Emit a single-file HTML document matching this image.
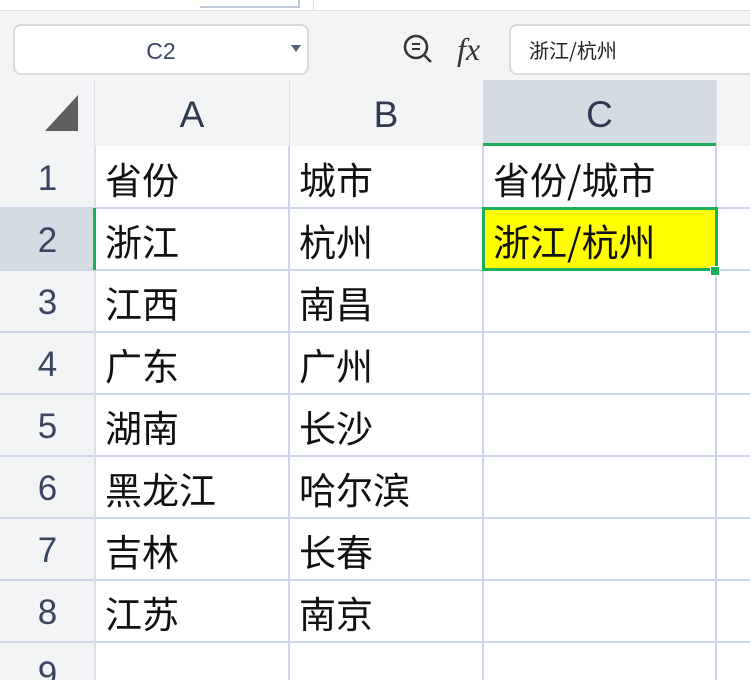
<!DOCTYPE html>
<html style="overflow:hidden;width:750px;height:680px"><head><meta charset="utf-8"><style>
body{margin:0;width:750px;height:680px;overflow:hidden;background:#fff;position:relative;font-family:"Liberation Sans","Noto Sans CJK SC",sans-serif}
.a{position:absolute;box-sizing:border-box}
.cell{position:absolute;box-sizing:border-box;font-size:37px;color:#111;padding-left:10px;line-height:64px;font-family:"Noto Sans CJK SC",sans-serif;white-space:nowrap}
.rh{position:absolute;left:0;width:95px;height:62px;text-align:center;line-height:66px;font-size:35px;color:#3a4560;background:#f3f4f6}
.ch{position:absolute;top:80px;height:66px;text-align:center;line-height:70px;font-size:37px;color:#2f3a52}
.hl{position:absolute;left:0;width:750px;height:2px;background:#cdd6e8}
.vl{position:absolute;top:146px;width:2px;height:534px;background:#cdd6e8}
</style></head><body>
<div class="a" style="left:0;top:0;width:750px;height:11px;background:#fff;border-bottom:1px solid #dde0e5"></div>
<div class="a" style="left:200px;top:0;width:100px;height:8px;border-right:2px solid #c0c8d8;border-bottom:2px solid #c0c8d8"></div>
<div class="a" style="left:313px;top:0;width:1px;height:10px;background:#dde0e5"></div>
<div class="a" style="left:0;top:11px;width:750px;height:135px;background:#f3f4f6"></div>
<div class="a" style="left:13px;top:24px;width:296px;height:51px;background:#fff;border:2px solid #d7d9dd;border-radius:8px;text-align:center;line-height:50px;font-size:23px;color:#3a4560">C2</div>
<div class="a" style="left:291px;top:45px;width:0;height:0;border-left:5px solid transparent;border-right:5px solid transparent;border-top:7px solid #5a6478"></div>
<svg class="a" style="left:400px;top:30px" width="40" height="40" viewBox="0 0 40 40"><circle cx="16" cy="17" r="11" fill="none" stroke="#333" stroke-width="2.5"/><line x1="24" y1="25" x2="31" y2="32" stroke="#333" stroke-width="2.5"/><line x1="12" y1="14" x2="20" y2="14" stroke="#333" stroke-width="2"/><line x1="12" y1="19" x2="20" y2="19" stroke="#333" stroke-width="2"/></svg>
<div class="a" style="left:457px;top:31px;font-family:'Liberation Serif',serif;font-style:italic;font-size:32px;color:#333">fx</div>
<div class="a" style="left:509px;top:24px;width:260px;height:51px;background:#fff;border:2px solid #d7d9dd;border-radius:8px;line-height:48px;font-size:20px;padding-left:18px;color:#222;font-family:'Noto Sans CJK SC',sans-serif">浙江/杭州</div>
<div class="a" style="left:0;top:80px;width:750px;height:66px;background:#f3f4f6"></div>
<div class="a" style="left:483px;top:80px;width:233px;height:66px;background:#d5dbe3"></div>
<div class="a" style="left:483px;top:143px;width:233px;height:3px;background:#19b05a"></div>
<div class="a" style="left:94px;top:80px;width:1px;height:66px;background:#dcdfe4"></div>
<div class="a" style="left:289px;top:80px;width:1px;height:66px;background:#dcdfe4"></div>
<div class="a" style="left:716px;top:80px;width:1px;height:66px;background:#dcdfe4"></div>
<svg class="a" style="left:45px;top:95px" width="35" height="37"><polygon points="33,0 33,36 0,36" fill="#5f5f5f"/></svg>
<div class="ch" style="left:95px;width:194px">A</div>
<div class="ch" style="left:289px;width:194px">B</div>
<div class="ch" style="left:483px;width:233px">C</div>
<div class="rh" style="top:146px">1</div>
<div class="rh" style="top:208px;background:#d5dbe3">2</div>
<div class="rh" style="top:270px">3</div>
<div class="rh" style="top:332px">4</div>
<div class="rh" style="top:394px">5</div>
<div class="rh" style="top:456px">6</div>
<div class="rh" style="top:518px">7</div>
<div class="rh" style="top:580px">8</div>
<div class="rh" style="top:642px;height:38px;overflow:hidden">9</div>
<div class="hl" style="top:207px"></div><div class="hl" style="top:269px"></div><div class="hl" style="top:331px"></div><div class="hl" style="top:393px"></div><div class="hl" style="top:455px"></div><div class="hl" style="top:517px"></div><div class="hl" style="top:579px"></div><div class="hl" style="top:641px"></div>
<div class="vl" style="left:94px;background:#dcdfe4"></div><div class="vl" style="left:288px"></div><div class="vl" style="left:482px"></div><div class="vl" style="left:715px"></div>
<div class="a" style="left:93px;top:208px;width:3px;height:62px;background:#19b05a"></div>
<div class="cell" style="left:95px;top:146px">省份</div><div class="cell" style="left:289px;top:146px">城市</div><div class="cell" style="left:483px;top:146px">省份/城市</div>
<div class="cell" style="left:95px;top:208px">浙江</div><div class="cell" style="left:289px;top:208px">杭州</div>
<div class="a" style="left:482px;top:207px;width:236px;height:64px;border:3px solid #19b05a;background:#ffff00"></div>
<div class="cell" style="left:483px;top:208px">浙江/杭州</div>
<div class="a" style="left:710px;top:266px;width:10px;height:10px;background:#19b05a;border:1px solid #fff"></div>
<div class="cell" style="left:95px;top:270px">江西</div><div class="cell" style="left:289px;top:270px">南昌</div>
<div class="cell" style="left:95px;top:332px">广东</div><div class="cell" style="left:289px;top:332px">广州</div>
<div class="cell" style="left:95px;top:394px">湖南</div><div class="cell" style="left:289px;top:394px">长沙</div>
<div class="cell" style="left:95px;top:456px">黑龙江</div><div class="cell" style="left:289px;top:456px">哈尔滨</div>
<div class="cell" style="left:95px;top:518px">吉林</div><div class="cell" style="left:289px;top:518px">长春</div>
<div class="cell" style="left:95px;top:580px">江苏</div><div class="cell" style="left:289px;top:580px">南京</div>
</body></html>
